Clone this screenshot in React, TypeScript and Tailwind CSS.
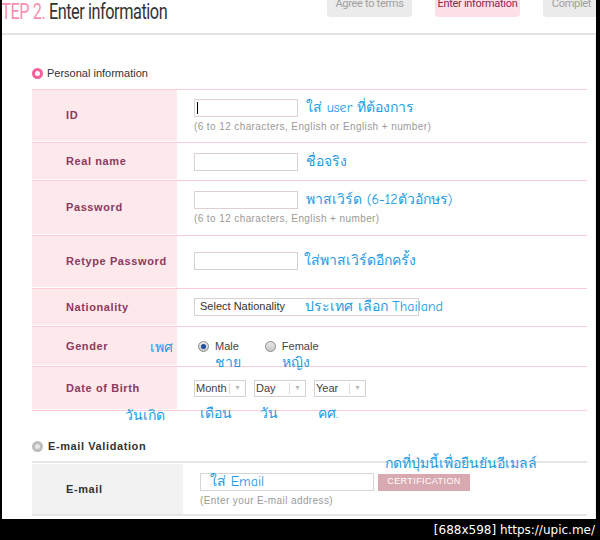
import React from "react";

const note = "text-[#1d9be2] font-['Comic_Neue','DejaVu_Sans',sans-serif]";

const Input = ({ w = 104, cursor = false }: { w?: number; cursor?: boolean }) => (
  <div
    className="h-[18px] border border-[#ddd0d3] bg-white relative"
    style={{ width: w }}
  >
    {cursor && <div className="absolute left-[2px] top-[2px] w-px h-[12px] bg-black" />}
  </div>
);

const Hint = ({ children }: { children: React.ReactNode }) => (
  <div className="mt-[4px] text-[10px] leading-[12px] text-[#9a9a9a] tracking-[0.4px]">{children}</div>
);

const Label = ({ children, extra }: { children: React.ReactNode; extra?: React.ReactNode }) => (
  <div className="w-[145px] shrink-0 bg-[#fde8ec] border-b border-white flex items-center pl-[34px] relative">
    <span className="font-bold text-[11px] text-[#8c3a5c] tracking-[0.6px]">{children}</span>
    {extra}
  </div>
);

const Row = ({
  h,
  label,
  extra,
  children,
}: {
  h: number;
  label: string;
  extra?: React.ReactNode;
  children: React.ReactNode;
}) => (
  <div className="flex border-b border-[#fbcdd6]" style={{ height: h }}>
    <Label extra={extra}>{label}</Label>
    <div className="flex-1 flex flex-col justify-center pl-[17px] relative">{children}</div>
  </div>
);

const DateSelect = ({ text, w = 52 }: { text: string; w?: number }) => (
  <div className="h-[17px] border border-[#d9d0d2] flex items-center bg-white" style={{ width: w }}>
    <span className="flex-1 pl-[1px] text-[11px] text-[#444]">{text}</span>
    <span className="w-px h-[11px] bg-[#ddd]" />
    <span className="w-[15px] text-center text-[7px] text-[#bbb]">▼</span>
  </div>
);

const Radio = ({ on }: { on?: boolean }) => (
  <span className="w-[11px] h-[11px] rounded-full border border-[#8a8a8a] bg-gradient-to-b from-[#e8e8e8] to-[#c8c8c8] flex items-center justify-center">
    {on && <span className="w-[5px] h-[5px] rounded-full bg-[#1c4f9c]" />}
  </span>
);

export default function App() {
  return (
    <div className="w-[600px] h-[540px] bg-black flex flex-col font-['Liberation_Sans',Arial,sans-serif] overflow-hidden">
      <div className="h-[519px] ml-[2px] w-[594px] bg-white flex flex-col overflow-hidden">
        {/* header */}
        <div className="h-[35px] flex items-start border-b-2 border-[#e3e3e3] shrink-0">
          <div className="flex-1 overflow-hidden">
            <div className="-ml-[10px] mt-0 text-[22px] leading-[24px] tracking-[-0.6px] font-['Roboto',sans-serif] scale-x-[0.74] origin-left whitespace-nowrap">
              <span className="text-[#f78fb2]">STEP 2.</span>{" "}
              <span className="text-[#333]">Enter information</span>
            </div>
          </div>
          <div className="flex gap-[23px] -mr-[4px]">
            {[
              { t: "Agree to terms", c: "bg-[#ebebeb] text-[#a0a0a0]" },
              { t: "Enter information", c: "bg-[#fde0e7] text-[#8a2a4c]" },
              { t: "Complete", c: "bg-[#ebebeb] text-[#a0a0a0]" },
            ].map((tab, i) => (
              <div
                key={tab.t}
                className={`h-[17px] rounded-b-[4px] flex items-start justify-center overflow-hidden ${tab.c}`}
                style={{ width: i === 2 ? 57 : 85 }}
              >
                <span className="text-[11px] leading-[11px] -mt-[2px] whitespace-nowrap font-['Roboto',sans-serif] tracking-[-0.3px]">
                  {i === 2 ? "Complet" : tab.t}
                </span>
              </div>
            ))}
          </div>
        </div>

        {/* content */}
        <div className="flex-1 border-r border-[#eeeeee] pl-[30px] pr-[8px] pt-[32px]">
          <div className="flex items-center gap-[4px] h-[12px]">
            <span className="w-[11px] h-[11px] rounded-full bg-[#f5609a] flex items-center justify-center">
              <span className="w-[5px] h-[5px] rounded-full bg-white" />
            </span>
            <span className="text-[11px] text-[#333]">Personal information</span>
          </div>

          <div className="mt-[10px] border-t border-[#fbcdd6]">
            <Row h={53} label="ID">
              <div className="flex items-center gap-[8px]">
                <Input cursor />
                <span className={`${note} text-[14px] leading-[14px]`}>ใส่ user ที่ต้องการ</span>
              </div>
              <Hint>(6 to 12 characters, English or English + number)</Hint>
            </Row>
            <Row h={38} label="Real name">
              <div className="flex items-center gap-[8px]">
                <Input />
                <span className={`${note} text-[14px] leading-[14px]`}>ชื่อจริง</span>
              </div>
            </Row>
            <Row h={55} label="Password">
              <div className="flex items-center gap-[8px]">
                <Input />
                <span className={`${note} text-[14px] leading-[14px]`}>พาสเวิร์ด (6-12ตัวอักษร)</span>
              </div>
              <Hint>(6 to 12 characters, English + number)</Hint>
            </Row>
            <Row h={53} label="Retype Password">
              <div className="flex items-center gap-[6px] -mt-[2px]">
                <Input />
                <span className={`${note} text-[14px] leading-[14px]`}>ใส่พาสเวิร์ดอีกครั้ง</span>
              </div>
            </Row>
            <Row h={38} label="Nationality">
              <div className="relative h-[18px] w-[225px] border border-[#ddd0d3] flex items-center pl-[5px] text-[11px] text-[#333] -mt-[2px]">
                Select Nationality
                <span className={`${note} absolute left-[110px] top-[1px] text-[14px] leading-[14px] whitespace-nowrap`}>
                  ประเทศ เลือก Thailand
                </span>
              </div>
            </Row>
            <Row
              h={40}
              label="Gender"
              extra={<span className={`${note} absolute left-[118px] top-[10px] text-[14px]`}>เพศ</span>}
            >
              <div className="flex items-center text-[11px] text-[#444] -mt-[1px] pl-[4px]">
                <Radio on />
                <span className="ml-[6px] relative">
                  Male
                  <span className={`${note} absolute left-0 top-[17px] text-[14px] leading-[16px] whitespace-nowrap`}>ชาย</span>
                </span>
                <span className="ml-[26px]">
                  <Radio />
                </span>
                <span className="ml-[6px] relative">
                  Female
                  <span className={`${note} absolute left-0 top-[17px] text-[14px] leading-[16px] whitespace-nowrap`}>หญิง</span>
                </span>
              </div>
            </Row>
            <Row
              h={44}
              label="Date of Birth"
              extra={<span className={`${note} absolute left-[93px] top-[41px] text-[14px] leading-[16px] whitespace-nowrap z-10`}>วันเกิด</span>}
            >
              <div className="flex items-center gap-[8px] relative">
                <DateSelect text="Month" />
                <DateSelect text="Day" />
                <DateSelect text="Year" />
                <span className={`${note} absolute left-[6px] top-[26px] text-[14px] leading-[16px]`}>เดือน</span>
                <span className={`${note} absolute left-[66px] top-[26px] text-[14px] leading-[16px]`}>วัน</span>
                <span className={`${note} absolute left-[124px] top-[26px] text-[14px] leading-[16px]`}>คศ.</span>
              </div>
            </Row>
          </div>

          <div className="mt-[29px] flex items-center gap-[5px] h-[12px]">
            <span className="w-[11px] h-[11px] rounded-full bg-[#bdbdbd] flex items-center justify-center">
              <span className="w-[5px] h-[5px] rounded-full bg-[#e6e6e6]" />
            </span>
            <span className="text-[11px] font-bold text-[#333] tracking-[0.6px]">E-mail Validation</span>
          </div>

          <div className="mt-[9px] border-t-2 border-[#e6e6e6] pt-[1px] border-b-2 border-b-[#e6e6e6]">
            <div className="flex h-[50px]">
              <div className="w-[151px] shrink-0 bg-[#f2f2f2] flex items-center pl-[34px]">
                <span className="font-bold text-[11px] text-[#333] tracking-[0.6px]">E-mail</span>
              </div>
              <div className="flex-1 pl-[17px] pt-[9px] relative">
                <div className="flex items-center gap-[4px]">
                  <div className="w-[174px] h-[18px] border border-[#d6d6d6] flex items-center pl-[9px]">
                    <span className={`${note} text-[14px] leading-[14px]`}>ใส่ Email</span>
                  </div>
                  <div className="w-[92px] h-[17px] bg-[#d9a9b1] text-white text-[9px] tracking-[0.4px] flex items-center justify-center">
                    CERTIFICATION
                  </div>
                </div>
                <Hint>(Enter your E-mail address)</Hint>
                <span className={`${note} absolute left-[202px] -top-[8px] text-[14px] leading-[16px] whitespace-nowrap`}>
                  กดที่ปุ่มนี้เพื่อยืนยันอีเมลล์
                </span>
              </div>
            </div>
          </div>
        </div>
      </div>
      <div className="flex-1 flex items-center justify-end pr-[5px] text-white text-[12px] font-['DejaVu_Sans',sans-serif]">
        [688x598] https://upic.me/
      </div>
    </div>
  );
}
